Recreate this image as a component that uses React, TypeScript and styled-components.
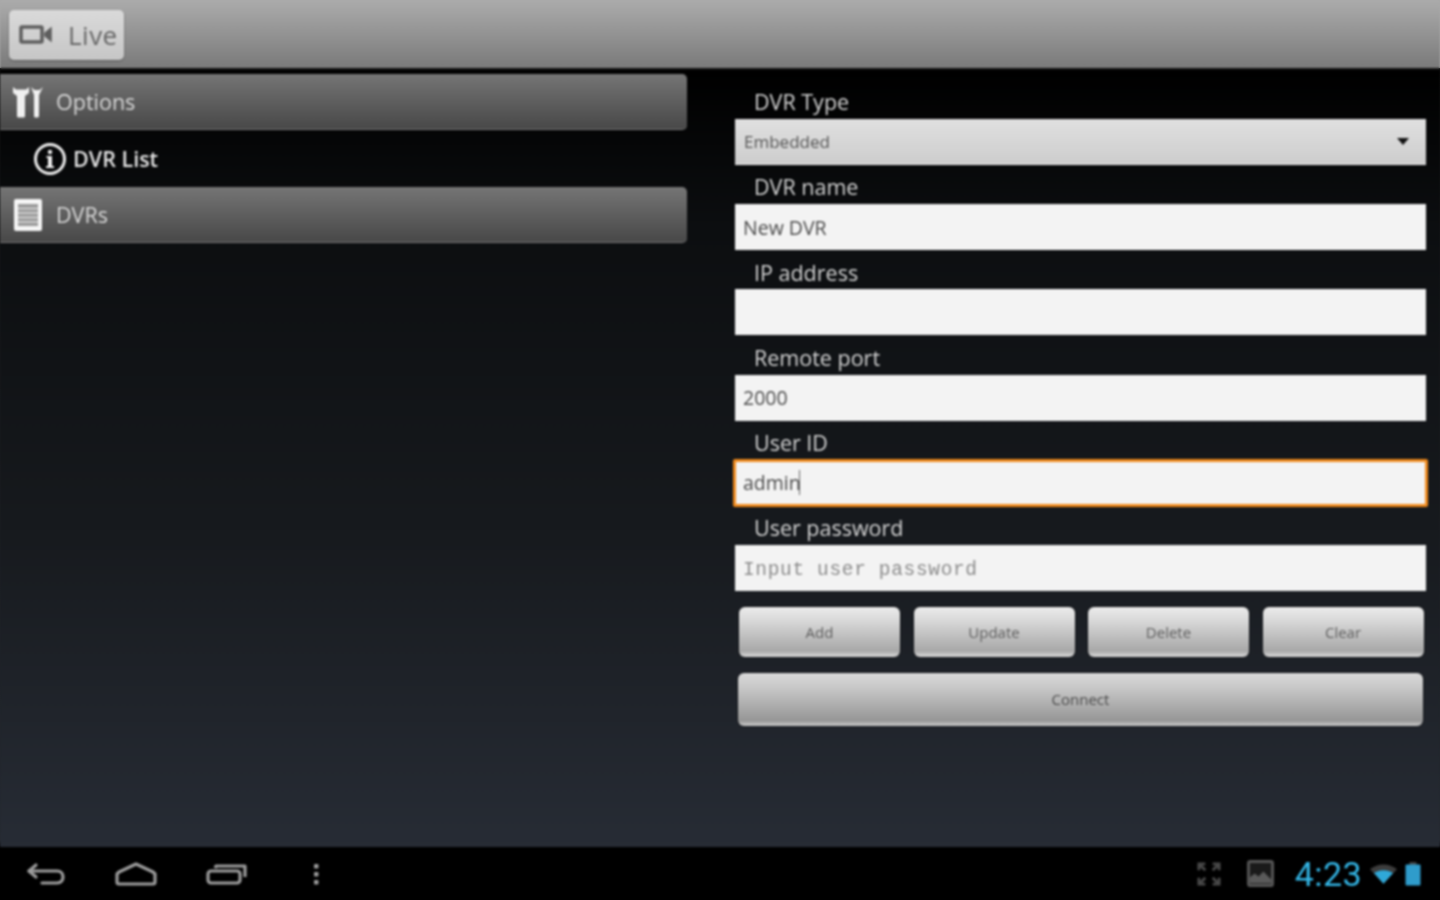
import React from 'react';
import styled, {createGlobalStyle} from 'styled-components';

const Global = createGlobalStyle`
  html,body{margin:0;padding:0;background:linear-gradient(#a8a8a8 0 68px,#111 68px,#24282f 840px,#000 848px);}
  #root{width:1440px;height:900px;overflow:hidden;}
  *{box-sizing:border-box;}
`;
const Screen = styled.div`
  width:1440px;height:900px;display:flex;flex-direction:column;overflow:hidden;
  font-family:"Open Sans","Noto Sans",sans-serif;filter:blur(.8px);
`;
const ActionBar = styled.header`
  height:70px;flex:none;padding:10px 0 0 9px;
  background:linear-gradient(#ababab,#a2a2a2 20%,#7a7a7a);
  border-bottom:2px solid #111;
`;
const LiveButton = styled.div`
  width:115px;height:50px;display:flex;align-items:center;gap:15px;padding-left:10px;
  border-radius:5px;color:#666;font-size:26px;letter-spacing:.5px;
  background:linear-gradient(#dadada,#c6c6c6);box-shadow:0 1px 2px #555;
`;
const Main = styled.main`
  flex:1;display:flex;padding-top:4px;
  background:linear-gradient(#000,#0c0e10 20%,#171a1e 60%,#272c35);
`;
const Side = styled.nav`
  width:687px;flex:none;display:flex;flex-direction:column;
`;
const MenuRow = styled.div<{$head?:boolean}>`
  height:${p => p.$head ? 56 : 57}px;display:flex;align-items:center;color:#e4e4e4;
  padding-left:${p => p.$head ? 13 : 33}px;gap:${p => p.$head ? 13 : 6}px;
  font-size:21.5px;
  font-weight:${p => p.$head ? 400 : 600};
  ${p => p.$head && `
    border-radius:0 5px 5px 0;color:#d8d8d8;
    background:linear-gradient(#757575,#484848);
    border-bottom:1px solid #777;
  `}
`;
const Form = styled.section`
  width:691px;margin-left:48px;padding-top:5.800px;display:flex;flex-direction:column;
`;
const Label = styled.label`
  height:39.200px;padding:7.500px 0 0 19px;color:#d4d4d4;font-size:21.5px;line-height:30px;white-space:nowrap;
`;
const Select = styled.div`
  height:46px;display:flex;align-items:center;justify-content:space-between;padding:0 17px 0 9px;
  color:#555;font-size:17px;background:linear-gradient(#e0e0e0,#cdcdcd);
  border-bottom:1px solid #eee;
`;
const Arrow = styled.i`
  width:0;height:0;border:6.500px solid transparent;border-top:7px solid #111;border-bottom:0;
`;
const Input = styled.div<{$focus?:boolean}>`
  height:46px;display:flex;align-items:center;padding-left:8px;background:#f3f3f3;
  color:#4a4a4a;font-size:19.5px;
  ${p => p.$focus && `margin:-1px -2px;padding-left:7px;height:48px;border:3px solid #f08a1c;border-radius:2px;`}
`;
const Placeholder = styled.span`
  font-family:"Liberation Mono","DejaVu Sans Mono",monospace;font-size:19.5px;color:#8c8c8c;letter-spacing:.65px;
  padding-top:5px;
`;
const Caret = styled.i`
  width:1.500px;height:25px;background:#666;margin-left:-2px;
`;
const Buttons = styled.div`
  display:grid;grid-template-columns:repeat(4,161px);gap:13.5px;margin:16px 0 0 4px;
`;
const Btn = styled.div`
  height:50px;display:flex;align-items:center;justify-content:center;border-radius:6px;
  color:#5e5e5e;font-size:15px;
  background:linear-gradient(#ececec,#d6d6d6 30%,#a8a8a8 88%,#dcdcdc);
  box-shadow:0 0 2px #000;
`;
const ConnectBtn = styled(Btn)`
  height:53px;margin:16px 3px 0;
  background:linear-gradient(#dadada,#c6c6c6 30%,#969696 90%,#cecece);
  color:#4a4a4a;
`;
const NavBar = styled.footer`
  height:53px;flex:none;background:#000;display:flex;align-items:center;padding:0 19px 0 26px;
`;
const NavKeys = styled.div`
  display:flex;align-items:center;gap:48px;
`;
const DotsKey = styled.span`
  display:flex;margin-left:17px;
`;
const Tray = styled.div`
  margin-left:auto;display:flex;align-items:center;
`;
const TraySlot = styled.span<{$left:number}>`
  display:flex;align-items:center;margin-left:${p => p.$left}px;
`;
const Clock = styled.span`
  color:#33b5e5;font-size:34px;font-family:"Roboto",sans-serif;font-weight:400;margin:0 8px 0 21px;letter-spacing:.4px;
`;

const VideoIcon = () => (
  <svg width="34" height="22" viewBox="0 0 34 22" fill="none" stroke="#5e5e5e" strokeWidth="3.500">
    <rect x="2" y="3" width="21" height="15" rx="1"/>
    <path d="M26 9l6-5v13l-6-5z" fill="#5e5e5e" strokeWidth="1.500"/>
  </svg>
);
const ToolsIcon = () => (
  <svg width="30" height="32" viewBox="0 0 30 32" fill="#f0f0f0">
    <path d="M0 1v6l4 3v20a1.500 1.500 0 0 0 1.500 1.500h5a1.500 1.500 0 0 0 1.500-1.500V10l4-3V1l-3 2.500H3z"/>
    <path d="M18 1l3 8v21a1.500 1.500 0 0 0 1.500 1.500h2a1.500 1.500 0 0 0 1.500-1.500V9l4-8-3.500 3h-5z"/>
  </svg>
);
const InfoIcon = () => (
  <svg width="34" height="34" viewBox="0 0 34 34" fill="none">
    <circle cx="17" cy="17" r="14.500" stroke="#eee" strokeWidth="3"/>
    <circle cx="17" cy="10" r="2.200" fill="#eee"/>
    <path d="M13.500 14h5.500v10h2v2h-8v-2h2v-8h-1.500z" fill="#eee"/>
  </svg>
);
const ListIcon = () => (
  <svg width="30" height="34" viewBox="0 0 30 34">
    <rect x="1" y="1" width="28" height="32" rx="2" fill="#f6f6f6"/>
    <rect x="5" y="6" width="20" height="22" fill="#9a9a9a"/>
    <path d="M5 10.500h20M5 15h20M5 19.500h20M5 24h20" stroke="#dadada" strokeWidth="1.500"/>
  </svg>
);
const BackIcon = () => (
  <svg width="40" height="24" viewBox="0 0 40 24" fill="none" stroke="#9c9c9c" strokeWidth="3.200" strokeLinecap="round" strokeLinejoin="round">
    <path d="M10 3L3 9l7 6"/>
    <path d="M3 9h28c4 0 6 3 6 6s-2 6-6 6H16"/>
  </svg>
);
const HomeIcon = () => (
  <svg width="44" height="24" viewBox="0 0 44 24" fill="none" stroke="#9c9c9c" strokeWidth="3.200" strokeLinejoin="round">
    <path d="M22 2L5 10l-2 2v8a2 2 0 0 0 2 2h34a2 2 0 0 0 2-2v-8l-2-2z"/>
  </svg>
);
const RecentIcon = () => (
  <svg width="42" height="24" viewBox="0 0 42 24" fill="none" stroke="#9c9c9c" strokeWidth="3.200" strokeLinejoin="round">
    <rect x="2" y="9" width="32" height="12" rx="3"/>
    <path d="M9 6l1-2h29v11"/>
  </svg>
);
const MenuDots = () => (
  <svg width="6" height="22" viewBox="0 0 6 22" fill="#9c9c9c">
    <rect x="1" y="1" width="4.500" height="4.500" rx="1"/>
    <rect x="1" y="9" width="4.500" height="4.500" rx="1"/>
    <rect x="1" y="17" width="4.500" height="4.500" rx="1"/>
  </svg>
);
const ExpandIcon = () => (
  <svg width="24" height="26" viewBox="0 0 26 26" fill="none" stroke="#484848" strokeWidth="3">
    <path d="M2 9V2h7M24 9V2h-7M2 17v7h7M24 17v7h-7M3 3l6 6M23 3l-6 6M3 23l6-6M23 23l-6-6"/>
  </svg>
);
const PictureIcon = () => (
  <svg width="27" height="27" viewBox="0 0 28 28">
    <rect x="1.500" y="1.500" width="25" height="25" rx="2" fill="#1a1a1a" stroke="#555" strokeWidth="3"/>
    <path d="M3 24v-6l5-4 4 3 5-5 8 8v4z" fill="#5a5a5a"/>
  </svg>
);
const WifiIcon = () => (
  <svg width="27" height="20" viewBox="0 0 28 20">
    <path d="M14 20L0 5c8-6.500 20-6.500 28 0z" fill="#3d3d3d"/>
    <path d="M14 20L4 9c5.500-4 14.500-4 20 0z" fill="#2fa8d8"/>
  </svg>
);
const BatteryIcon = () => (
  <svg width="16" height="24" viewBox="0 0 16 24">
    <rect x="4.500" y="0" width="7" height="3" fill="#444"/>
    <rect x="0.500" y="2.500" width="15" height="21" rx="1" fill="#2f9ccb"/>
  </svg>
);

const fields = [
  {label: 'DVR name', value: 'New DVR'},
  {label: 'IP address', value: ''},
  {label: 'Remote port', value: '2000'},
];

const App: React.FC = () => (
  <Screen>
    <Global/>
    <ActionBar>
      <LiveButton><VideoIcon/>Live</LiveButton>
    </ActionBar>
    <Main>
      <Side>
        <MenuRow $head><ToolsIcon/>Options</MenuRow>
        <MenuRow><InfoIcon/>DVR List</MenuRow>
        <MenuRow $head><ListIcon/>DVRs</MenuRow>
      </Side>
      <Form>
        <Label>DVR Type</Label>
        <Select>Embedded<Arrow/></Select>
        {fields.map(f => (
          <React.Fragment key={f.label}>
            <Label>{f.label}</Label>
            <Input>{f.value}</Input>
          </React.Fragment>
        ))}
        <Label>User ID</Label>
        <Input $focus>admin<Caret/></Input>
        <Label>User password</Label>
        <Input><Placeholder>Input user password</Placeholder></Input>
        <Buttons>
          {['Add', 'Update', 'Delete', 'Clear'].map(b => <Btn key={b}>{b}</Btn>)}
        </Buttons>
        <ConnectBtn>Connect</ConnectBtn>
      </Form>
    </Main>
    <NavBar>
      <NavKeys>
        <BackIcon/><HomeIcon/><RecentIcon/><DotsKey><MenuDots/></DotsKey>
      </NavKeys>
      <Tray>
        <ExpandIcon/>
        <TraySlot $left={26}><PictureIcon/></TraySlot>
        <Clock>4:23</Clock>
        <WifiIcon/>
        <TraySlot $left={8}><BatteryIcon/></TraySlot>
      </Tray>
    </NavBar>
  </Screen>
);

export default App;
